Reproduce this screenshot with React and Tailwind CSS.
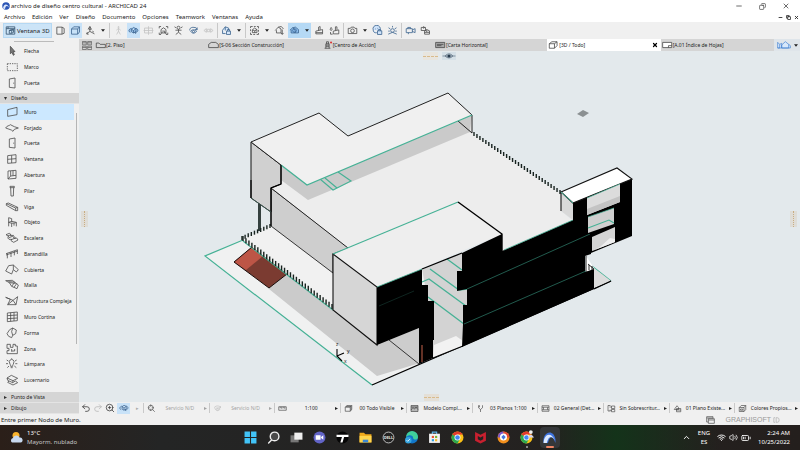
import { BatteryMedium, ChevronUp, Copy, Minus, Redo2, Undo2, Volume2, Wifi, X, ZoomIn } from "lucide-react";

const menus = [
  "Archivo", "Edición", "Ver", "Diseño", "Documento", "Opciones", "Teamwork", "Ventanas", "Ayuda",
];

// Toolbar outlines, drawn on a 36 x 36 grid
const glyphs = {
  window: "M4 6H32V30H4zM4 12H32M10 6V12M14 18L20 15H28V24L22 27H14zM14 18H22V27M22 18L28 15",
  perspective: "M6 7H23V30H6zM23 7L30 11V27L23 30",
  axonometry: "M5 13L12 6H31V23L25 30H5zM5 13H25V30M25 13L31 6",
  projection: "M4 29L16 21L31 29M16 21V5L10 14M16 5L21 14H12M24 20L29 23M7 24V30H12",
  walk: "M18 5A2 2 0 1 1 18 9A2 2 0 1 1 18 5M18 10V20L12 31M18 20L24 31M11 17L18 11L25 17",
  orbit: "M8 24C0 22 2 12 12 11M26 11C36 14 34 24 22 25L26 21M22 25L26 29M11 14L18 8L26 12V21L18 26L11 22zM11 14L18 18L26 12M18 18V26",
  target: "M5 10H31V26H5zM18 4V32M2 18H34",
  fit: "M4 11V5H10M26 5H32V11M32 25V31H26M10 31H4V25M10 15L18 9L26 15V26H10zM14 20H22V26M8 30L14 24M28 30L22 24",
  person: "M18 4A5 5 0 1 1 18 14A5 5 0 1 1 18 4M8 17H28M18 14V24L9 31M18 24L27 31M10 9L5 6M26 9L31 6",
  turn: "M6 18A12 9 0 0 1 30 15M30 8V15H23M9 20C13 14 23 14 28 20C24 29 12 29 9 20M18 18A3 3 0 1 1 18 25A3 3 0 1 1 18 18",
  plane: "M3 18L11 12V24zM33 18L25 12V24zM14 14H22V22H14z",
  lockHouse: "M5 17L14 6L25 10V17M5 17V28H15M14 6V18M18 20H31V31H18zM21 20V15H28V20",
  marquee: "M5 5H12M16 5H22M26 5H31V11M31 16V22M31 26V31H25M20 31H14M10 31H5V25M5 20V14M5 10V5M11 16L18 10L26 15V25H11zM11 16L19 19L26 15M19 19V25",
  houseArrow: "M4 18L14 7L23 13V26H8V17M14 7L24 5L31 13M27 15V30M23 26L27 31L31 26",
  style: "M3 17L12 9L21 7L31 15V26H7V16M12 9L20 17V26M18 12A6 6 0 1 1 18 24A6 6 0 1 1 18 12",
  brush: "M6 20L28 15V29H6zM15 18V7L20 5V16M6 25H28",
  brushDrop: "M14 20L32 16V29H14zM21 18V6H26V16M7 8C3 14 3 17 7 18C11 17 11 14 7 8M5 23V30H12",
  camera: "M4 11H11L14 7H23L26 11H32V28H4zM18 13A6 6 0 1 1 18 25A6 6 0 1 1 18 13",
  renderSet: "M4 16A12 11 0 1 1 26 17M4 16C4 26 12 26 16 25M10 13H12M18 11H20M18 19H32V31H18zM21 19V15H28V19",
  sun: "M18 12A6 6 0 1 1 18 24A6 6 0 1 1 18 12M18 3V8M5 9L11 13M31 9L25 13M4 30L18 24L32 30M4 20H9M27 20H32",
  video: "M4 12H24V25H4zM24 16L33 12V25L24 21M9 12V8H18V12M11 25V30",
  cameras: "M4 8H18V18H4zM11 5A3 3 0 1 1 11 11M15 20L22 15L31 19V30H15zM22 15V24H31M15 24H22",
  scope: "M15 5A10 10 0 1 1 15 25A10 10 0 1 1 15 5M22 22L31 31M15 2V11M15 19V28M5 15H11M19 15H28",
  scale: "M3 11H33V25H3zM9 11V17M15 11V19M21 11V17M27 11V19",
  layers: "M5 13L11 6H31V21L25 29H5zM5 13H25V29M25 13L31 6M8 10H28V25",
  model: "M4 6H32V30H4zM4 24L12 14L18 21L24 12L32 23M4 12H32",
  pen: "M10 5V15L18 22L26 15V5M18 22V32M14 5V13",
  frame: "M4 7H32V29H4zM10 13H26V23H10zM4 13H10M26 13H32M4 23H10M26 23H32",
  override: "M14 6H4V28H14M18 8H31V18H18zM18 22H31V31H18zM10 12H18M10 25H18",
  plan: "M5 22L16 7L22 14V22zM14 18H31V31H14zM14 24H31",
  colours: "M5 14L13 6H31V22L24 30H5zM5 14H24V30M24 14L31 6M10 20H19V25H10z",
};

// Tool outlines, drawn on a 42 x 36 grid
const selectTools = [
  { label: "Flecha", d: "M16 4V26L21 22L25 31L28 29L24 20H30z", fill: "#777" },
  { label: "Marco", d: "M7 8H37V29H7z", dash: "4 3" },
  { label: "Puerta", d: "M13 6L30 3V33L13 31zM26 17V20" },
];

const designTools = [
  { label: "Muro", d: "M8 11L36 4V26L8 31z" },
  { label: "Forjado", d: "M2 18C6 10 13 12 16 8L28 14L40 18L28 22L24 28L19 24z" },
  { label: "Puerta", d: "M13 6L30 3V33L13 31zM26 17V20" },
  { label: "Ventana", d: "M8 8L33 5V29L8 31zM20 7V30M8 19L33 17" },
  { label: "Abertura", d: "M9 6L33 4V28L9 30zM17 6V21L33 19M9 30L17 21M24 5V20" },
  { label: "Pilar", d: "M15 4H28V8H15zM17 8L18 33H25L26 8" },
  { label: "Viga", d: "M4 8L10 6L38 19V29L32 29L4 13zM4 8L32 21V29M32 21L38 19" },
  { label: "Objeto", d: "M11 31V5L20 8V19M11 19L20 22V33M11 19L20 16L34 19V31M20 22L34 20M27 21V29" },
  { label: "Escalera", d: "M3 8L13 4L18 8L16 11L25 10L28 15L25 18L35 18L39 24L26 31L18 26L20 22L12 22L8 17L12 14zM8 12L18 8M12 17L25 12M18 23L33 18" },
  { label: "Barandilla", d: "M3 17L38 5M3 21L38 9M7 16V31M18 12V27M28 9V22M37 6V18" },
  { label: "Cubierta", d: "M2 21L11 5L25 3L40 17L34 24L25 17L20 30zM25 3L25 17" },
  { label: "Malla", d: "M2 5L22 4L40 18L36 29L20 22L13 11zM10 8L28 9M20 22L29 10M13 11L32 13M27 25L35 14" },
  { label: "Estructura Compleja", d: "M2 7L24 16L38 5L33 29L8 29L16 13zM8 29L24 16L33 29" },
  { label: "Muro Cortina", d: "M7 6L37 3V29L7 32zM17 5V31M27 4V30M7 14L37 12M7 23L37 21" },
  { label: "Forma", d: "M14 8L23 3L34 9L32 20L23 25L20 32L11 28L6 20zM23 3L20 14L23 25" },
  { label: "Zona", d: "M6 4H16V13H24V4H31V9H37V32H6V23H12V16H6zM20 18V26M20 24H29V18" },
  { label: "Lámpara", d: "M14 15A7 7 0 1 1 26 15C25 20 23 20 23 25H17C17 20 15 20 14 15M17 29H23M20 1V3M5 6L10 9M35 6L30 9M3 17H9M31 17H37M7 29L12 24M34 29L28 24" },
  { label: "Lucernario", d: "M6 12L19 4L38 13L24 20zM6 12L8 19L23 26L24 20M12 21L8 25L24 33L38 26L31 21M23 26L31 21" },
];

const tabs = [
  { label: "[2. Piso]", d: "M2 10V3H6L8 5H16V10z" },
  { label: "[S-06 Sección Construcción]", d: "M1 10V5L5 2H12L16 5V10z" },
  { label: "[Centro de Acción]", d: "M6 11V4H11V11M4 11H13M6 6H11M6 8H11M7 4V1H10V4", dot: true },
  { label: "[Carta Horizontal]", d: "M1 2H15V10H1zM3 5H13M3 7H10", fill: "#aaa" },
  { label: "[3D / Todo]", d: "M2 4L6 1H14V7L10 11H2zM2 4H10V11M10 4L14 1", active: true },
  { label: "[A.01 Índice de Hojas]", d: "M1 2H15V10H1zM10 10V7H15", fill: "#fff" },
];

const quickOptions = [
  { label: "Servicio N/D", glyph: "scope", muted: true },
  { label: "Servicio N/D", glyph: "turn", faded: true, muted: true },
  { label: "1:100", glyph: "scale" },
  { label: "00 Todo Visible", glyph: "layers" },
  { label: "Modelo Compl...", glyph: "model", fill: "#b5b5b5" },
  { label: "03 Planos 1:100", glyph: "pen" },
  { label: "02 General (Det...", glyph: "frame" },
  { label: "Sin Sobrescritur...", glyph: "override" },
  { label: "01 Plano Existe...", glyph: "plan" },
  { label: "Colores Propios...", glyph: "colours" },
];

const Glyph = ({ name, fill = "none", className }) => (
  <svg viewBox="0 0 36 36" className={`shrink-0 ${className}`} aria-hidden="true">
    <path d={glyphs[name]} fill={fill} stroke="currentColor" strokeWidth="2.6" strokeLinejoin="round" />
  </svg>
);

const ToolRow = ({ tool, selected }) => (
  <button
    className={`flex w-full min-h-0 items-center gap-[5px] pl-[5px] text-left whitespace-nowrap ${
      selected ? "bg-[#cce8ff]" : ""
    }`}
  >
    <svg viewBox="0 0 42 36" className="h-3 w-[14px] shrink-0" aria-hidden="true">
      <path
        d={tool.d}
        fill={tool.fill || "none"}
        stroke="#4b4b4b"
        strokeWidth="2.4"
        strokeDasharray={tool.dash}
        strokeLinejoin="round"
      />
    </svg>
    {tool.label}
  </button>
);

const Caret = () => (
  <button aria-label="Más opciones" className="flex h-[15px] w-2 items-center justify-center">
    <svg viewBox="0 0 6 4" className="h-[3px] w-1">
      <path d="M0 0H6L3 4z" fill="#222" />
    </svg>
  </button>
);

const Divider = () => <span className="h-[15px] w-px bg-[#c8c8c8]" />;

const BarButton = ({ glyph, label, on, blue, off, fill }) => (
  <button
    aria-label={label}
    className={`flex h-[15px] w-[13px] items-center justify-center ${on ? "bg-[#c8e2f8]" : ""} ${
      off ? "text-[#c2c2c2]" : blue ? "text-[#3a628e]" : "text-[#4a4a4a]"
    }`}
  >
    <Glyph name={glyph} fill={fill} className="h-[11px] w-[11px]" />
  </button>
);

const Toolbar = () => (
  <div className="flex h-[17px] shrink-0 items-center gap-[2px] bg-[#f0f0f0] pl-[3px]">
    <button className="flex h-[15px] w-[49px] items-center gap-px border border-[#b5d8f3] bg-[#cce4f7] pl-px whitespace-nowrap">
      <Glyph name="window" className="h-[11px] w-[11px] text-[#31506b]" />
      Ventana 3D
    </button>
    <BarButton glyph="perspective" label="Perspectiva" />
    <BarButton glyph="axonometry" label="Axonometría" on blue />
    <BarButton glyph="projection" label="Proyección" />
    <Caret />
    <Divider />
    <BarButton glyph="walk" label="Explorar" off />
    <BarButton glyph="orbit" label="Órbita" on blue fill="#9cc6ef" />
    <BarButton glyph="target" label="Centrar" off />
    <BarButton glyph="fit" label="Mirar a" />
    <BarButton glyph="person" label="Vista humana" />
    <BarButton glyph="turn" label="Rotar" blue />
    <BarButton glyph="plane" label="Plano" off />
    <Divider />
    <BarButton glyph="lockHouse" label="Filtrar" blue fill="#d5e7fa" />
    <Caret />
    <Divider />
    <BarButton glyph="marquee" label="Marco 3D" />
    <Caret />
    <BarButton glyph="houseArrow" label="Elementos" />
    <div className="flex w-[23px] justify-between bg-[#b5d9f5]">
      <BarButton glyph="style" label="Estilo 3D" blue fill="#8fc0f0" />
      <Caret />
    </div>
    <BarButton glyph="brush" label="Superficies" />
    <BarButton glyph="brushDrop" label="Copiar superficie" />
    <Divider />
    <BarButton glyph="camera" label="Fotorender" />
    <Caret />
    <BarButton glyph="renderSet" label="Ajustes de render" blue fill="#cfe3fa" />
    <BarButton glyph="sun" label="Sol" blue />
    <Divider />
    <BarButton glyph="video" label="Vuelo" blue />
    <BarButton glyph="cameras" label="Cámaras" />
  </div>
);

const GroupHeader = ({ label, open }) => (
  <button className="flex h-[11px] shrink-0 items-center gap-1 border-b border-[#e4e4e4] bg-[#d5d5d5] pl-1 text-left">
    <svg viewBox="0 0 4 4" className="h-[3px] w-[3px]">
      <path d={open ? "M0 0H4L2 4z" : "M0 0V4L4 2z"} fill="#333" />
    </svg>
    {label}
  </button>
);

const Toolbox = () => (
  <aside className="flex w-[79px] shrink-0 flex-col bg-[#f0f0f0] text-[5px]">
    <div className="mx-[14px] mt-[2px] h-px w-10 shrink-0 bg-[#bbb]" />
    <div className="grid h-[49px] shrink-0 auto-rows-fr pt-px">
      {selectTools.map((tool) => (
        <ToolRow key={tool.label} tool={tool} />
      ))}
    </div>
    <div className="h-[2px] shrink-0" />
    <GroupHeader label="Diseño" open />
    <div className="flex flex-1">
      <div className="grid w-[74px] auto-rows-fr">
        {designTools.map((tool) => (
          <ToolRow key={tool.label} tool={tool} selected={tool.label === "Muro"} />
        ))}
      </div>
      <div className="mt-[9px] mb-11 ml-[2px] w-px bg-[#b5b5b5]" />
    </div>
    <div className="h-1 shrink-0" />
    <GroupHeader label="Punto de Vista" />
    <GroupHeader label="Dibujo" />
  </aside>
);

const TabBar = () => (
  <div className="flex h-3 shrink-0 bg-[#d5d5d5] text-[5px]">
    <button aria-label="Todas las pestañas" className="flex w-[15px] items-center justify-center">
      <svg viewBox="0 0 30 26" className="h-[9px] w-[10px]">
        <path d="M1 1H13V11H1zM17 1H29V11H17zM1 15H13V25H1zM17 15H29V25H17zM1 5H13M17 5H29M1 19H13M17 19H29" fill="none" stroke="#555" strokeWidth="2" />
      </svg>
    </button>
    {tabs.map((tab) => (
      <button
        key={tab.label}
        className={`flex min-w-0 flex-1 items-center pl-px whitespace-nowrap ${tab.active ? "bg-white" : ""}`}
      >
        <svg viewBox="0 0 17 12" className="h-2 w-[11px]">
          <path d={tab.d} fill={tab.fill || "none"} stroke="#444" strokeWidth="1.2" />
          {tab.dot && <circle cx="14" cy="2" r="1.6" fill="#d33" />}
        </svg>
        {tab.label}
        {tab.active && <X size={6} strokeWidth={5} className="mr-[3px] ml-auto text-black" />}
      </button>
    ))}
    <button aria-label="Vista" className="flex w-[26px] items-center justify-end gap-px bg-[#dfe5ea]">
      <svg viewBox="0 0 42 24" className="h-2 w-[14px]">
        <path d="M2 4L8 10V21H2zM8 10L14 7V21M14 12L25 2L35 10V21H14zM35 10L40 14V21H2" fill="#d7e8fb" stroke="#3e7fd0" strokeWidth="2" />
      </svg>
      <Caret />
    </button>
  </div>
);

// Evenly spaced posts of a handrail between two points
const Railing = ({ from, to, count, height }) => (
  <g stroke="#18231f" strokeWidth="1.4">
    {Array.from({ length: count + 1 }, (_, i) => {
      const x = from[0] + ((to[0] - from[0]) * i) / count;
      const y = from[1] + ((to[1] - from[1]) * i) / count;
      return <line key={i} x1={x} y1={y} x2={x} y2={y + height} />;
    })}
  </g>
);

const Model = () => (
  <svg viewBox="79 51 721 351" className="h-full w-full" role="img" aria-label="Modelo 3D del centro cultural">
    {/* Site */}
    <path d="M205 256L243 239L333 270L594 268L611 281L372 385z" fill="#f0f1f1" />
    <path d="M262 255L287 274L390 341L420 363L377 376L269 289z" fill="#cbcbcb" />
    <path d="M372 385L205 256L243 240M588 263L611 281" fill="none" stroke="#45b195" strokeWidth="1.2" />
    <path d="M372 385L611 281" stroke="#000" strokeWidth="1.3" />

    {/* Ramp */}
    <path d="M252 247L234 262L269 288L287 274z" fill="#7b3b31" />
    <path d="M252 247L234 262L246 270L263 256z" fill="#bd5546" />
    <path d="M252 247L234 262L269 288L287 274" fill="none" stroke="#1a0e0c" strokeWidth="1" />

    {/* Terrace and long wall */}
    <path d="M243 239L271 226L333 272V310z" fill="#f1f1f1" />
    <path d="M271 188L349 248L333 254V273L271 226z" fill="#cecece" stroke="#222" strokeWidth="0.9" />
    <path d="M243 241L333 310" stroke="#45b195" strokeWidth="1.2" />
    <path d="M259.500 203V231" stroke="#35413f" strokeWidth="3" />
    <Railing from={[242, 236]} to={[270, 224]} count={9} height={4} />
    <Railing from={[243, 236]} to={[332, 304]} count={30} height={5} />

    {/* Main roof */}
    <path d="M271 188L281 184V165L307 185L472 115V133L561 194V211L573 221L502 252L458 202L348 248z" fill="#ededed" />
    <path d="M281 165V180L308 200L470 132L472 115L307 185z" fill="#cacaca" />
    <path d="M271 188L348 248" stroke="#222" />
    <path d="M320 179L333 190L351 181L338 172M325 178L337 188" fill="none" stroke="#45b195" strokeWidth="1.1" />

    {/* Upper volume */}
    <path d="M251 142L281 165V184L271 188V212L251 198z" fill="#d0d0d0" stroke="#111" strokeWidth="1" />
    <path d="M251 142L319 113L348 136L448 93L472 115L307 185z" fill="#f0f0f0" />
    <path d="M281 165L251 142L319 113L348 136L448 93L472 115V133L458 121" fill="none" stroke="#222" strokeWidth="1" />
    <path d="M281 165L307 185L472 115" fill="none" stroke="#45b195" strokeWidth="1.3" />
    <path d="M251 180V198M281 165V184L271 188V226" fill="none" stroke="#000" strokeWidth="1.2" />
    <path d="M251 198L271 212" stroke="#45665d" strokeWidth="0.8" />
    <Railing from={[474, 132]} to={[560, 190]} count={29} height={4} />

    {/* Front volume */}
    <path d="M333 254L458 202L502 234L377 287z" fill="#eeeeee" />
    <path d="M333 254L377 287V345L333 310z" fill="#d6d6d6" stroke="#111" strokeWidth="1.1" />
    <path d="M333 254L458 202" stroke="#45b195" strokeWidth="1.1" />
    <path d="M458 202L502 234V252" fill="none" stroke="#000" strokeWidth="1.4" />
    <path d="M377 345L419 328V364L389 340z" fill="#cdcdcd" />
    <path d="M389 340L419 364" stroke="#222" strokeWidth="0.9" />

    {/* Recess with stair edges */}
    <path d="M422 269L462 253L468 289V305L463 346L433 358L428 301z" fill="#d3d3d3" />
    <path d="M434 345L456 336L463 341V346L433 358z" fill="#f2f2f2" />
    <path d="M447 259L462 270M430 269L459 290L467 289M422 282L429 279L466 306M428 297L464 324" fill="none" stroke="#45b195" strokeWidth="1.3" />
    <path d="M422 269L462 253M433 358L463 346" stroke="#000" strokeWidth="1.3" />

    {/* Hatched fronts, dense enough to read as solid */}
    <path d="M377 287L422 269V285H428V301H434V340H433V358L419 364V328L377 345z" fill="#000" />
    <path d="M377 287L422 269" stroke="#45b195" strokeWidth="0.8" />
    <path d="M379 306L414 291" stroke="#173e35" strokeWidth="0.6" />
    <path d="M422 345V362" stroke="#a5533f" strokeWidth="1.2" />
    <path d="M586 256L594 268L586 272z" fill="#fff" />
    <path d="M594 268L611 281L594 288z" fill="#dcdcdc" />
    <path d="M586 256V272M588 264L594 269M589 265V270M592 266V270" stroke="#111" strokeWidth="0.9" />
    <path d="M462 253L502 234V251L573 220L587 214L588 233H591V254L585 256V272L594 269V289L462 347L463 324V305H467V289L457 291V271H462z" fill="#000" />
    <path d="M504 250L573 220" stroke="#45b195" strokeWidth="0.8" />
    <path d="M467 289L590 234M464 324L586 271" stroke="#2a7161" strokeWidth="0.8" />

    {/* Side volume */}
    <path d="M561 192L573 203V220L561 211z" fill="#d9d9d9" />
    <path d="M561 211V192" stroke="#111" strokeWidth="1.1" />
    <path d="M573 202L632 179V236L591 253V234L573 234z" fill="#000" />
    <path d="M561 192L617 168L632 179L573 203z" fill="#fff" stroke="#111" strokeWidth="1.1" />
    <path d="M561 192L573 203" stroke="#45b195" strokeWidth="1" />
    <path d="M587 198L620 184V202L587 215z" fill="#dcdcdc" />
    <path d="M587 209L620 196V202L587 215z" fill="#c3c3c3" />
    <path d="M588 217L614 208V224L588 233z" fill="#cfcfcf" />
    <path d="M588 228L609 220L614 223" fill="none" stroke="#45b195" strokeWidth="1.1" />
    <path d="M587 198L620 184M588 217L614 208" stroke="#45b195" strokeWidth="0.7" />
    <path d="M592 237L615 227V242L592 251z" fill="#d4d4d4" />
    <path d="M600 247L610 238L615 239V242L592 251z" fill="#efefef" />
    <path d="M594 289L611 281" stroke="#000" strokeWidth="1.3" />

    <path d="M577 114L583 110L589 113L583 117z" fill="#8b9092" />

    {/* Origin axes */}
    <path d="M337 349V356L344 353M337 356L342 361" fill="none" stroke="#000" strokeWidth="1.1" />
    <g className="text-[5px]" fill="#222">
      <text x="336" y="346">z</text>
      <text x="347" y="353">y</text>
      <text x="344" y="363">x</text>
    </g>
  </svg>
);

const Viewport = () => (
  <div className="relative min-h-0 flex-1 bg-[#e3e9ec]">
    <Model />
    <div className="absolute inset-x-0 top-px flex justify-center gap-1">
      <span className="flex h-2 w-[15px] items-center bg-[#e8e5de]">
        <span className="w-full border-t border-dashed border-[#d9bb8c]" />
      </span>
      <span className="flex h-2 w-[14px] items-center justify-center bg-[#d5e0e7]">
        <svg viewBox="0 0 28 12" className="h-[6px] w-[14px]">
          <path d="M1 6H27M6 6Q14 -3 22 6Q14 14 6 6" fill="#bccbd5" stroke="#5d6f7f" strokeWidth="1.4" />
          <circle cx="14" cy="6" r="3" fill="#26394c" />
        </svg>
      </span>
    </div>
    <span className="absolute top-1/2 left-[2px] flex h-4 w-[7px] -translate-y-4 justify-center bg-[#dfddd7]">
      <span className="h-full border-l border-dotted border-[#c9ad82]" />
    </span>
    <span className="absolute top-1/2 right-[3px] flex h-4 w-[7px] -translate-y-4 justify-center bg-[#dfddd7]">
      <span className="h-full border-l border-dotted border-[#c9ad82]" />
    </span>
    <span className="absolute bottom-px left-1/2 flex h-[7px] w-[15px] -translate-x-4 items-center bg-[#e4dfd6]">
      <span className="w-full border-t border-dashed border-[#d9bb8c]" />
    </span>
  </div>
);

const QuickOptions = () => (
  <div className="flex h-3 shrink-0 items-center bg-[#f0f0f0] text-[5px]">
    <div className="flex w-16 shrink-0 items-center gap-[2px] pl-[2px] text-[#444]">
      <button aria-label="Zoom anterior"><Undo2 size={10} /></button>
      <button aria-label="Zoom siguiente" className="text-[#bbb]"><Redo2 size={10} /></button>
      <button aria-label="Aumentar"><ZoomIn size={10} /></button>
      <button aria-label="Órbita" className="flex h-[11px] w-[13px] items-center justify-center bg-[#c8e2f8] text-[#3a628e]">
        <Glyph name="orbit" className="h-[10px] w-[10px]" />
      </button>
      <span className="pl-1 text-[#aaa]">▸</span>
    </div>
    {quickOptions.map(({ label, glyph, fill, muted, faded }, idx) => (
      <button
        key={idx}
        className={`flex h-[10px] min-w-0 flex-1 items-center border-l border-[#c9c9c9] pl-[3px] whitespace-nowrap ${
          muted ? "text-[#a3a3a3]" : "text-[#222]"
        }`}
      >
        <Glyph
          name={glyph}
          fill={fill}
          className={faded ? "h-[9px] w-[9px] text-[#c0c0c0]" : "h-[9px] w-[9px] text-[#444]"}
        />
        <span className="flex-1 text-center">{label}</span>
        <svg viewBox="0 0 4 4" className="mr-[2px] h-[3px] w-[3px] shrink-0">
          <path d="M0 0V4L4 2z" fill="currentColor" />
        </svg>
      </button>
    ))}
  </div>
);

const Chrome = () => (
  <>
    <circle cx="12" cy="12" r="11" fill="#fbc116" />
    <path d="M12 12L2.500 6.500A11 11 0 0 1 21.500 6.500H12z" fill="#e33b2e" />
    <path d="M12 12L2.500 6.500A11 11 0 0 0 12 23L17 14z" fill="#2da94f" />
    <circle cx="12" cy="12" r="5.500" fill="#fff" />
    <circle cx="12" cy="12" r="4.200" fill="#4285f4" />
  </>
);

const apps = [
  {
    name: "Inicio",
    art: <path d="M1 1H11V11H1zM13 1H23V11H13zM1 13H11V23H1zM13 13H23V23H13z" fill="#42c3f7" />,
  },
  {
    name: "Buscar",
    art: <path d="M3 22L8 17M22 10A8 8 0 1 1 6 10A8 8 0 1 1 22 10z" fill="#4a4a4a" stroke="#eee" strokeWidth="2.600" strokeLinecap="round" />,
  },
  {
    name: "Vista de tareas",
    art: <><path d="M1 8H16V21H1z" fill="#777" /><path d="M8 3H23V16H8z" fill="#eee" /></>,
  },
  {
    name: "Chat",
    art: <><circle cx="12" cy="12" r="11" fill="#6264c7" /><path d="M5 8H14V16H5zM15 11L19 8V16L15 13z" fill="#fff" /></>,
  },
  {
    name: "Twinmotion",
    art: <><circle cx="12" cy="12" r="11" fill="#050505" /><path d="M1 7H23V11H15L12 21H8L11 11H1z" fill="#fff" /></>,
  },
  {
    name: "Explorador de archivos",
    art: <><path d="M1 3H9L12 6H23V21H1z" fill="#f0a91b" /><path d="M1 9H23V21H1z" fill="#ffd54e" /><path d="M7 16H17V21H7z" fill="#3a88d4" /></>,
  },
  {
    name: "Dell",
    art: (
      <>
        <circle cx="12" cy="12" r="10" fill="#222" stroke="#ddd" strokeWidth="1.500" />
        <text x="12" y="14.500" textAnchor="middle" fontSize="7" fontWeight="bold" fill="#eee">DELL</text>
      </>
    ),
  },
  {
    name: "Edge",
    art: <><circle cx="13" cy="12" r="11" fill="#1277c9" /><path d="M2 11A11 11 0 0 1 24 11C24 17 15 17 15 13C15 7 7 6 2 11" fill="#40cf9b" /><circle cx="6" cy="17" r="6" fill="#35a4df" /><path d="M3 17L5 19L9 15" fill="none" stroke="#fff" strokeWidth="1.500" /></>,
  },
  {
    name: "Microsoft Store",
    art: <><path d="M8 6V2H16V6" fill="none" stroke="#58b3e6" strokeWidth="2" /><path d="M2 5H22V22H2z" fill="#f2f2f2" /><path d="M7 9H11V13H7z" fill="#e65532" /><path d="M13 9H17V13H13z" fill="#7bb72f" /><path d="M7 15H11V19H7z" fill="#2a9fdf" /><path d="M13 15H17V19H13z" fill="#f7b928" /></>,
  },
  { name: "Chrome", art: <Chrome /> },
  {
    name: "McAfee",
    art: <path d="M2 2L12 7L22 2V18L12 23L2 18zM7 9V15L12 18L17 15V9L12 12z" fill="#c8202f" fillRule="evenodd" />,
  },
  {
    name: "Avast",
    art: <><circle cx="12" cy="12" r="11" fill="#f28f1c" /><path d="M2 8A11 11 0 0 1 12 1V12H2z" fill="#7956cf" /><path d="M12 1A11 11 0 0 1 23 12L12 12z" fill="#e34a35" /><circle cx="12" cy="11" r="6.500" fill="#fff" /><path d="M12 7L16 11L12 16L8 11z" fill="#4576dc" /></>,
  },
  {
    name: "Chrome (perfil)",
    running: true,
    art: <><Chrome /><circle cx="20" cy="2" r="3.500" fill="#eee" /><path d="M14 12Q20 2 26 12z" fill="#d8d5ef" /></>,
  },
  {
    name: "Archicad",
    active: true,
    art: <><path d="M1 22C-2 2 19 -6 23 15V22C18 8 13 8 9 22z" fill="#3f74e0" /><path d="M1 22C2 6 14 0 22 17C15 7 10 10 7 22z" fill="#dce9ff" /></>,
  },
];

const Taskbar = () => (
  <footer className="h-[25px] shrink-0 bg-linear-to-r from-[#2b1f19] via-[#242525] via-20% to-[#241f1d] text-[6px] text-white">
    <div className="grid h-full grid-cols-[1fr_auto_1fr] items-center bg-linear-to-r from-transparent from-68% via-[#14331a] via-77% to-transparent to-90%">
      <div className="flex items-center gap-1 pl-[10px] leading-[9px]">
        <svg viewBox="0 0 26 26" className="h-[13px] w-[13px]">
          <circle cx="12" cy="9" r="7" fill="#f9b32c" />
          <path d="M4 23A5 5 0 0 1 6 14A7 7 0 0 1 19 13A5 5 0 0 1 21 23z" fill="#c8d9ef" />
        </svg>
        <div>
          <div>13°C</div>
          <div className="text-[#c6c6c6]">Mayorm. nublado</div>
        </div>
      </div>
      <nav className="flex gap-[3px]">
        {apps.map((app) => (
          <button
            key={app.name}
            aria-label={app.name}
            className={`flex h-[21px] w-5 flex-col items-center justify-end gap-[2px] rounded-sm ${
              app.active ? "bg-[#353739]" : ""
            }`}
          >
            <svg viewBox="0 0 24 24" className="h-[13px] w-[13px] overflow-visible">{app.art}</svg>
            <span
              className={`h-[2px] rounded-sm ${
                app.active ? "w-2 bg-[#ee8463]" : app.running ? "w-[2px] bg-[#aaa]" : "w-px"
              }`}
            />
          </button>
        ))}
      </nav>
      <div className="flex items-center justify-end gap-[3px] pr-[10px] leading-[9px]">
        <ChevronUp size={9} strokeWidth={2.5} />
        <div className="px-1 text-center">
          <div>ENG</div>
          <div>ES</div>
        </div>
        <Wifi size={9} strokeWidth={2.5} />
        <Volume2 size={9} />
        <BatteryMedium size={10} />
        <div className="pl-1 text-right">
          <div>2:24 AM</div>
          <div>10/25/2022</div>
        </div>
      </div>
    </div>
  </footer>
);

const App = () => {
  return (
    <div className="flex h-screen flex-col overflow-hidden bg-white font-['Noto_Sans',sans-serif] text-[6px] leading-[8px] text-[#222]">
      {/* Title bar */}
      <header className="flex h-3 shrink-0 items-center gap-px pl-[2px]">
        <svg viewBox="0 0 16 16" className="h-2 w-2">
          <circle cx="8" cy="8" r="7.500" fill="#2b55b5" />
          <path d="M2 13C3 3 11 3 14 11C10 6 7 7 6 14z" fill="#dce7fb" />
        </svg>
        <h1>archivo de diseño centro cultural - ARCHICAD 24</h1>
        <div className="ml-auto flex items-center gap-4 pr-[10px]">
          <button aria-label="Minimizar"><Minus size={8} /></button>
          <button aria-label="Restaurar"><Copy size={7} className="-scale-x-100" /></button>
          <button aria-label="Cerrar"><X size={8} /></button>
        </div>
      </header>

      {/* Menu */}
      <nav className="flex h-[10px] shrink-0 items-center gap-[7px] pl-1">
        {menus.map((menu) => (
          <button key={menu}>{menu}</button>
        ))}
        <div className="ml-auto flex items-center gap-[3px] pr-px">
          <button aria-label="Minimizar documento"><Minus size={5} strokeWidth={4} /></button>
          <button aria-label="Restaurar documento"><Copy size={5} strokeWidth={4} /></button>
          <button aria-label="Cerrar documento"><X size={5} strokeWidth={4} /></button>
        </div>
      </nav>

      <Toolbar />

      <main className="flex min-h-0 flex-1">
        <Toolbox />
        <section className="flex min-w-0 flex-1 flex-col">
          <TabBar />
          <Viewport />
          <QuickOptions />
        </section>
      </main>

      {/* Status line */}
      <div className="flex h-[11px] shrink-0 items-center bg-[#f0f0f0] pr-5 pl-px">
        <span>Entre primer Nodo de Muro.</span>
        <svg viewBox="0 0 27 24" className="mr-[10px] ml-auto h-2 w-[9px]">
          <path d="M7 18H2V2H21V7M2 6H21M7 8H25V22H7zM7 12H25" fill="none" stroke="#555" strokeWidth="2.2" />
        </svg>
        <span className="font-['Liberation_Sans',sans-serif] text-[7px] text-[#999]">GRAPHISOFT</span>
        <svg viewBox="0 0 20 18" className="ml-[2px] h-[6px] w-[7px]">
          <path d="M6 2H2V16H6M9 2H12A6 7 0 0 1 12 16H9z" fill="none" stroke="#aaa" strokeWidth="2" />
        </svg>
      </div>

      <Taskbar />
    </div>
  );
};

export default App;
